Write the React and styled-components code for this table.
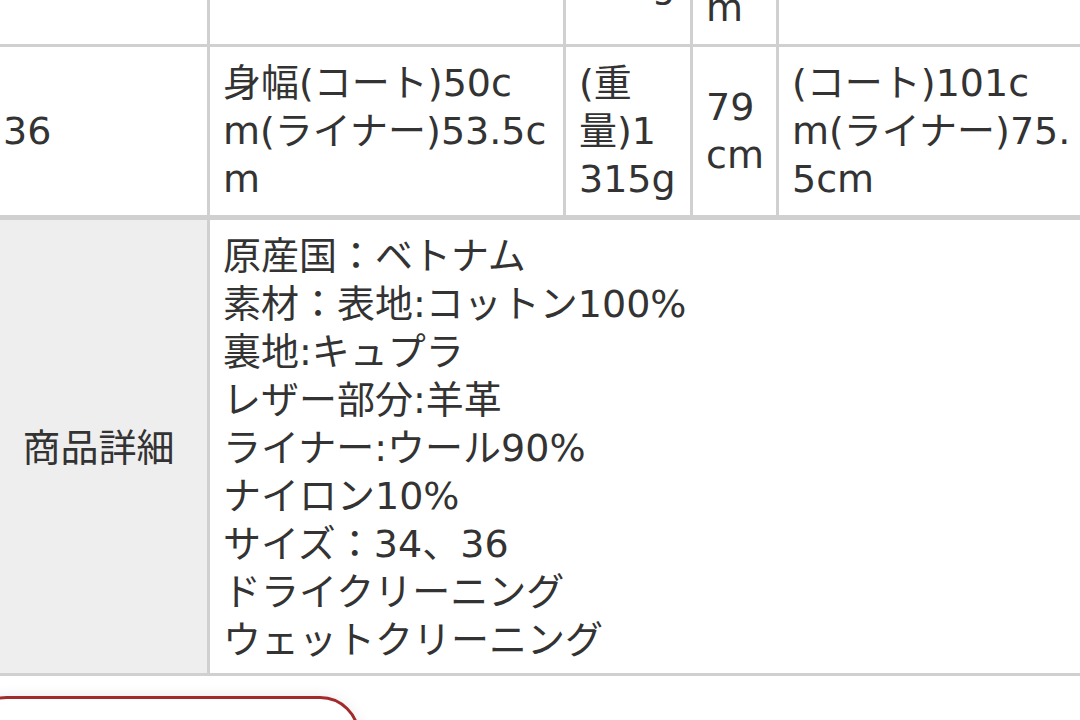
import React from 'react'
import styled, { createGlobalStyle } from 'styled-components'

const GlobalStyle = createGlobalStyle`
  html, body {
    margin: 0;
    padding: 0;
    background: #fff;
  }
  body {
    font-family: "DejaVu Sans", "Noto Sans CJK JP", sans-serif;
    color: #333;
  }
`

const Page = styled.div`
  width: 1080px;
  height: 720px;
  overflow: hidden;
`

// the screenshot is scrolled: first row is mostly above the viewport
const Scroller = styled.div`
  margin: -175px 0 0 -13px;
`

const SpecTable = styled.table`
  width: 1103px;
  table-layout: fixed;
  border-collapse: collapse;
  font-size: 38px;
  font-weight: 400;
  line-height: 48px;
  color: #333;
`

const Col = styled.col`
  width: ${(p) => p.$w}px;
`

const Cell = styled.td`
  border: 3px solid #d0d0d0;
  padding: 12px 13px;
  vertical-align: middle;
  white-space: nowrap;
  text-align: ${(p) => (p.$center ? 'center' : 'left')};
  background: ${(p) => (p.$head ? '#eeeeee' : '#fff')};
`

const DetailRow = styled.tr`
  td {
    border-top-width: 5px;
    padding-bottom: 9px;
  }
`

const Lines = ({ items }) =>
  items.map((t, i) => (
    <React.Fragment key={i}>
      {i > 0 && <br />}
      {t}
    </React.Fragment>
  ))

const BackButton = styled.div`
  margin: 20px 0 0 -20px;
  width: 393px;
  height: 80px;
  box-sizing: border-box;
  border: 3px solid #a32a2a;
  border-radius: 40px;
  background: #fff;
  box-shadow: 0 0 14px rgba(0, 0, 0, 0.08);
`

const widths = [220, 356, 127, 86, 314]

const rows = [
  [
    ['34'],
    ['身幅(コート)48c', 'm(ライナー)51.5c', 'm'],
    ['(重', '量)1', '290g'],
    ['(着', '丈)', '78c', 'm'],
    ['(コート)100c', 'm(ライナー)74.', '5cm'],
  ],
  [
    ['36'],
    ['身幅(コート)50c', 'm(ライナー)53.5c', 'm'],
    ['(重', '量)1', '315g'],
    ['79', 'cm'],
    ['(コート)101c', 'm(ライナー)75.', '5cm'],
  ],
]

const details = [
  '原産国：ベトナム',
  '素材：表地:コットン100%',
  '裏地:キュプラ',
  'レザー部分:羊革',
  'ライナー:ウール90%',
  'ナイロン10%',
  'サイズ：34、36',
  'ドライクリーニング',
  'ウェットクリーニング',
]

export default function App() {
  return (
    <Page>
      <GlobalStyle />
      <Scroller>
        <SpecTable>
          <colgroup>
            {widths.map((w, i) => (
              <Col key={i} $w={w} />
            ))}
          </colgroup>
          <tbody>
            {rows.map((r, i) => (
              <tr key={i}>
                {r.map((c, j) => (
                  <Cell key={j}>
                    <Lines items={c} />
                  </Cell>
                ))}
              </tr>
            ))}
            <DetailRow>
              <Cell $head $center>商品詳細</Cell>
              <Cell colSpan={4}>
                <Lines items={details} />
              </Cell>
            </DetailRow>
          </tbody>
        </SpecTable>
        <BackButton />
      </Scroller>
    </Page>
  )
}
